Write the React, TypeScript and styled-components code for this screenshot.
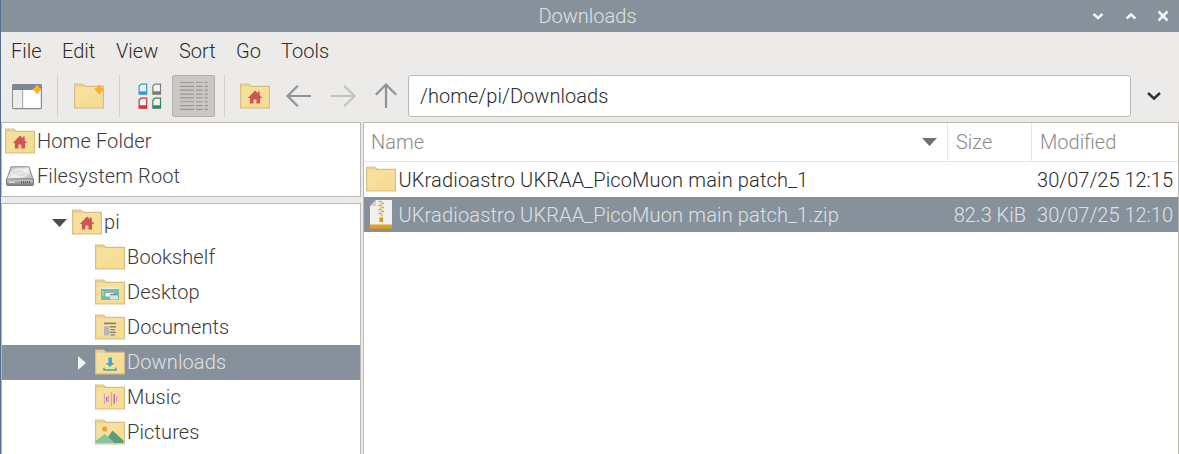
import React from 'react';
import styled, { createGlobalStyle } from 'styled-components';

const Global = createGlobalStyle`
  * { box-sizing: border-box; }
  body { margin: 0; overflow: hidden; background: #ecebe9; }
`;

const Window = styled.div`
  display: flex;
  flex-direction: column;
  width: 1179px;
  height: 454px;
  overflow: hidden;
  border-left: 1px solid #54708e;
  background: #ecebe9;
  color: #3a3a3a;
  font-family: Roboto, 'Liberation Sans', sans-serif;
  font-weight: 300;
  font-size: 20px;
  line-height: 24px;
  white-space: pre;
  svg { display: block; flex: none; }
`;

const TitleBar = styled.header`
  display: grid;
  grid-template-columns: 93px 1fr 93px;
  align-items: center;
  height: 32px;
  flex: none;
  background: #87919b;
  color: #dfe2e5;
`;
const Title = styled.span`
  text-align: center;
  padding-right: 5px;
`;
const WindowButtons = styled.div`
  display: flex;
  gap: 16.500px;
  padding-left: 4px;
`;

const MenuBar = styled.nav`
  display: flex;
  gap: 20px;
  height: 38px;
  flex: none;
  align-items: center;
  padding-left: 10px;
  color: #2b2b2b;
`;
const MenuItem = styled.span<{ $w: number }>`
  width: ${p => p.$w}px;
`;

const ToolBar = styled.div`
  display: flex;
  align-items: center;
  height: 52px;
  flex: none;
  padding-left: 4px;
`;
const Tool = styled.div<{ $w?: number; $active?: boolean }>`
  display: flex;
  align-items: center;
  justify-content: center;
  flex: none;
  width: ${p => p.$w ?? 44}px;
  height: 42px;
  margin-right: ${p => (p.$active ? 1 : 0)}px;
  border-radius: 2px;
  border: 1px solid ${p => (p.$active ? '#b5b0ac' : 'transparent')};
  background: ${p => (p.$active ? '#cbc7c4' : 'transparent')};
`;
const Divider = styled.div`
  width: 1px;
  height: 42px;
  margin: 0 8px;
  flex: none;
  background: #d2d0cd;
`;
const PathField = styled.div`
  width: 723px;
  height: 42px;
  margin-left: 1px;
  padding: 8px 11px;
  border: 1px solid #bab7b3;
  border-radius: 3px;
  background: #fff;
  color: #2b2b2b;
  letter-spacing: 0.03px;
`;

const Body = styled.main`
  display: flex;
  gap: 2px;
  flex: 1;
  min-height: 0;
`;
const Side = styled.aside`
  display: flex;
  flex-direction: column;
  gap: 6px;
  width: 360px;
  flex: none;
`;
const Panel = styled.section<{ $h?: number; $padTop?: number }>`
  ${p => (p.$h ? `height: ${p.$h}px; flex: none;` : 'flex: 1; min-height: 0;')}
  min-width: 0;
  overflow: hidden;
  border: solid #bbb8b4;
  border-width: ${p => (p.$h ? '1px' : '1px 1px 0')};
  background: #fff;
  padding-top: ${p => p.$padTop ?? 0}px;
`;

const TreeRow = styled.div<{ $indent: number; $selected?: boolean }>`
  display: flex;
  align-items: center;
  gap: 2px;
  height: 35px;
  padding-left: ${p => p.$indent}px;
  background: ${p => (p.$selected ? '#87919b' : 'transparent')};
  color: ${p => (p.$selected ? '#dfe2e5' : '#3a3a3a')};
`;
const TreeLabel = styled.span`
  padding-bottom: 2px;
  letter-spacing: 0.12px;
`;
const Expander = styled.span<{ $w: number }>`
  display: flex;
  width: ${p => p.$w}px;
`;

const HeaderRow = styled.div`
  display: flex;
  height: 39px;
  border-bottom: 1px solid #e6e4e2;
  color: #8b8b8b;
`;
const HeaderCell = styled.div<{ $w?: number }>`
  display: flex;
  align-items: center;
  justify-content: space-between;
  ${p => (p.$w ? `width: ${p.$w}px;` : 'flex: 1;')}
  padding: 0 10px 0 7px;
  & + & { border-left: 1px solid #e6e4e2; padding-left: 8px; }
`;
const FileRow = styled.div<{ $selected?: boolean }>`
  display: flex;
  align-items: center;
  height: 35px;
  padding-left: 2px;
  background: ${p => (p.$selected ? '#87919b' : 'transparent')};
  color: ${p => (p.$selected ? '#dfe2e5' : '#2b2b2b')};
`;
const FileIcon = styled.span`
  display: flex;
  justify-content: center;
  width: 30px;
`;
const FileName = styled.span`
  flex: 1;
  margin-left: 2.500px;
  letter-spacing: 0.155px;
`;
const FileMeta = styled.span<{ $w: number }>`
  width: ${p => p.$w}px;
  padding-right: 5px;
  text-align: right;
`;

type Emblem = 'home' | 'desktop' | 'documents' | 'downloads' | 'music' | 'pictures' | 'new';

const emblems: Record<Emblem, React.ReactNode> = {
  home: <path d="M15 7.500 7.800 15h2.100v5.500h3.500v-4h3v4h3.700V15h2.100l-2.500-2.700V8.500h-1.800v1.800Z" fill="#cf5556" />,
  desktop: (
    <>
      <path d="M6 10h18v11H6z" fill="#6dc0a4" />
      <path d="M6 8.500h18V10H6z" fill="#e9eeea" />
      <path d="M10.500 12.500h8v5h-8z" fill="#f2f4f4" />
      <path d="M15 15.500h8v5h-8z" fill="#cfe4e8" />
      <path d="M10.500 12.500h8v1.200h-8zM15 15h8v1.200h-8z" fill="#7d8b8e" />
      <path d="M7.200 12.500h1.500v1.200H7.200zM7.200 15h1.500v1.200H7.200z" fill="#d8efe6" />
    </>
  ),
  documents: (
    <>
      <path d="M9 8.500h12v1.700H9zM14.500 12h6.500v1.500h-6.500zM15.500 15h4.500v1.300h-4.500zM14.500 17.700h6.500v1.400h-6.500zM15.500 20.300h4.500v1.200h-4.500z" fill="#858078" />
      <path d="M9 12.200h5v9.300H9z" fill="#b9b7b5" />
    </>
  ),
  downloads: (
    <>
      <path d="M13.300 8.500h3.700V14h2.300L15 18 10.700 14h2.600Z" fill="#45a7cd" />
      <path d="M9 18.800v2.300h12v-2.300" fill="none" stroke="#4f9fae" strokeWidth="1.500" />
    </>
  ),
  music: (
    <>
      <path d="M9.500 10v10M13.500 11.500v7M16.500 8v14.500M21.500 12.500v5" stroke="#d9a0c4" strokeWidth="1.200" />
      <path d="M11.700 13v4.500M19.200 10v9.500" stroke="#b266c2" strokeWidth="1.300" />
    </>
  ),
  pictures: (
    <>
      <circle cx="9.700" cy="10" r="2.600" fill="#dea748" />
      <path d="m9 24 8.500-12.500 11 10v2.500z" fill="#5a9f78" />
      <path d="M1 24v-2.500l9-6.500L19.500 24z" fill="#86c4a2" />
    </>
  ),
  new: <path d="M25.200 2.500 26.700 5l2.500 1.500-2.500 1.500-1.500 2.500L23.700 8l-2.500-1.500L23.700 5Z" fill="#fdb02f" stroke="#fdb02f" strokeWidth="1.700" strokeLinejoin="round" />,
};

const Folder = ({ emblem }: { emblem?: Emblem }) => (
  <svg width="30" height="27" viewBox="0 0 30 27">
    <path d="M.6 1.600h7.800l2.600 2.300h18.400v21.500H.6z" transform="translate(0 -.6)" fill="#f7e09b" stroke="#d5bd8a" strokeWidth="1.200" />
    <path d="m1.200 24.200L28.800 6v18.200z" fill="#f5db90" opacity=".6" />
    <path d="M1 1.500h7.200l2 2H1z" fill="#e9cc88" />
    {emblem && emblems[emblem]}
  </svg>
);

const Drive = () => (
  <svg width="30" height="25" viewBox="0 0 30 25">
    <defs>
      <linearGradient id="drive-top" x1="0" y1="0" x2="1" y2="1">
        <stop offset="0" stopColor="#b9bab9" />
        <stop offset=".5" stopColor="#eeeeee" />
        <stop offset="1" stopColor="#a9aaa9" />
      </linearGradient>
      <linearGradient id="drive-face" x1="0" y1="0" x2="0" y2="1">
        <stop offset="0" stopColor="#d5d5d5" />
        <stop offset="1" stopColor="#777" />
      </linearGradient>
    </defs>
    <path d="M6 2.800h18l4.300 13H1.700z" fill="url(#drive-top)" stroke="#8c8d8c" />
    <path d="M1.500 15h27v5.500q0 1-1 1h-25q-1 0-1-1z" fill="url(#drive-face)" stroke="#777" />
    <ellipse cx="15" cy="9" rx="8" ry="3.800" fill="none" stroke="#fafafa" opacity=".8" />
    <ellipse cx="15" cy="9" rx="3" ry="1.300" fill="#f5f5f5" stroke="#c2c2c2" strokeWidth=".6" />
    <path d="M16 18.300h10" stroke="#555" strokeWidth="2" strokeDasharray="1 1" />
    <path d="M4 18.300h6" stroke="#eee" />
  </svg>
);

const Archive = () => (
  <svg width="24" height="32" viewBox="0 0 24 32">
    <path d="M7 1h16v29.500H1V7z" fill="#f0f0ef" />
    <path d="M7 1v6H1z" fill="#cfd0d0" />
    <path d="M1 25.500h22v5H1z" fill="#e0a12c" />
    <path d="M1 29.700h22v1.100H1z" fill="#b67f1e" />
    <path d="M9.500 2.500h3M12 4.500h3M9.500 6.500h3M12 8.500h3M9.500 10.500h3M12 12.500h3M9.500 14.500h3M12 16.500h2" stroke="#dca03a" strokeWidth="1.400" />
    <path d="M12.300 2v15" stroke="#e8c582" strokeWidth="1.200" />
    <path d="M10.500 18.500h3.600V23h-3.600z" fill="#d9941b" />
  </svg>
);

const NewWindow = () => (
  <svg width="30" height="27" viewBox="0 0 30 27">
    <rect x=".6" y="1.600" width="28.800" height="24" rx="1" fill="#fff" stroke="#8c8c8c" strokeWidth="1.200" />
    <path d="M1.200 7h9v18h-9z" fill="#ececec" />
    <path d="M.5 1.500h29V7H.5z" fill="#7d8793" />
    <path d="M10.700 7v18" stroke="#a3a3a3" />
    <path d="m25.200 2.800 1.500 2.500 2.300 1.200-2.300 1.200-1.500 2.500-1.500-2.500-2.300-1.200 2.300-1.200Z" fill="#fdb02f" stroke="#fdb02f" strokeWidth="1.700" strokeLinejoin="round" />
  </svg>
);

const gridTiles = [
  { x: 0.5, y: 0.5, c: '#2a9fd0' },
  { x: 14.3, y: 0.5, c: '#7b7b7b' },
  { x: 0.5, y: 14.5, c: '#c9353d' },
  { x: 14.3, y: 14.5, c: '#37855a' },
];
const IconView = () => (
  <svg width="24" height="27" viewBox="0 0 24 27">
    {gridTiles.map(t => (
      <g key={t.c} transform={`translate(${t.x} ${t.y})`}>
        <path d="M2.500.6h5.700v10H.6V2.500z" fill="#f2f3f3" stroke={t.c} strokeWidth="1.200" />
        <path d="M.6 7.800h7.600v2.800H.6z" fill={t.c} />
      </g>
    ))}
  </svg>
);

const ListView = () => (
  <svg width="30" height="30" viewBox="0 0 30 30">
    {Array.from({ length: 8 }, (_, i) => 1.5 + i * 3.85).map(y => (
      <path key={y} d={`M1 ${y}h14M17 ${y}h6.500M25.500 ${y}h3.500`} stroke="#9a9794" strokeWidth="1.200" />
    ))}
  </svg>
);

const Arrow = ({ turn, color }: { turn: number; color: string }) => (
  <svg width="28" height="28" viewBox="0 0 28 28">
    <path d="M26 14H2.500M12.800 3.800 2.500 14l10.300 10.200" transform={`rotate(${turn} 14 14)`} fill="none" stroke={color} strokeWidth="2.200" />
  </svg>
);

const Triangle = ({ right, color }: { right?: boolean; color: string }) => (
  <svg width={right ? 8 : 15} height={right ? 14 : 8} viewBox={right ? '0 0 8 14' : '0 0 15 8'}>
    <path d={right ? 'M0 0 8 7 0 14z' : 'M0 0h15L7.500 8z'} fill={color} />
  </svg>
);

const Glyph = ({ d, color = '#f4f5f6' }: { d: string; color?: string }) => (
  <svg width="16" height="16" viewBox="0 0 16 16">
    <path d={d} fill="none" stroke={color} strokeWidth="2.500" />
  </svg>
);

type Place = { label: string; emblem?: Emblem; indent: number; open?: boolean; selected?: boolean };
const places: Place[] = [
  { label: 'pi', emblem: 'home', indent: 50, open: true },
  { label: 'Bookshelf', indent: 93 },
  { label: 'Desktop', emblem: 'desktop', indent: 93 },
  { label: 'Documents', emblem: 'documents', indent: 93 },
  { label: 'Downloads', emblem: 'downloads', indent: 76, selected: true },
  { label: 'Music', emblem: 'music', indent: 93 },
  { label: 'Pictures', emblem: 'pictures', indent: 93 },
];

const menus: [string, number][] = [['File', 31], ['Edit', 34], ['View', 43], ['Sort', 37], ['Go', 25], ['Tools', 50]];

export default function App() {
  return (
    <Window>
      <Global />
      <TitleBar>
        <span />
        <Title>Downloads</Title>
        <WindowButtons>
          <Glyph d="M3.500 6 8 10l4.500-4" />
          <Glyph d="M3.500 10.500 8 6.500l4.500 4" />
          <Glyph d="m3.500 3.500 9 9M12.500 3.500l-9 9" />
        </WindowButtons>
      </TitleBar>
      <MenuBar>
        {menus.map(([label, w]) => <MenuItem key={label} $w={w}>{label}</MenuItem>)}
      </MenuBar>
      <ToolBar>
        <Tool><NewWindow /></Tool>
        <Divider />
        <Tool $w={45}><Folder emblem="new" /></Tool>
        <Divider />
        <Tool><IconView /></Tool>
        <Tool $w={43} $active><ListView /></Tool>
        <Divider />
        <Tool><Folder emblem="home" /></Tool>
        <Tool><Arrow turn={0} color="#929292" /></Tool>
        <Tool $w={43}><Arrow turn={180} color="#c3c2c1" /></Tool>
        <Tool $w={43}><Arrow turn={90} color="#929292" /></Tool>
        <PathField>/home/pi/Downloads</PathField>
        <Tool $w={45}><Glyph d="M2 5 8 10.500 14 5" color="#2e3436" /></Tool>
      </ToolBar>
      <Body>
        <Side>
          <Panel $h={75} $padTop={1}>
            <TreeRow $indent={3}><Folder emblem="home" /><TreeLabel>Home Folder</TreeLabel></TreeRow>
            <TreeRow $indent={3}><Drive /><TreeLabel>Filesystem Root</TreeLabel></TreeRow>
          </Panel>
          <Panel $padTop={1}>
            {places.map(p => (
              <TreeRow key={p.label} $indent={p.indent} $selected={p.selected}>
                {p.open && <Expander $w={18}><Triangle color="#4c4c4c" /></Expander>}
                {p.selected && <Expander $w={15}><Triangle right color="#f2f3f4" /></Expander>}
                <Folder emblem={p.emblem} />
                <TreeLabel>{p.label}</TreeLabel>
              </TreeRow>
            ))}
          </Panel>
        </Side>
        <Panel>
          <HeaderRow>
            <HeaderCell>Name<Triangle color="#707070" /></HeaderCell>
            <HeaderCell $w={84}>Size</HeaderCell>
            <HeaderCell $w={147}>Modified</HeaderCell>
          </HeaderRow>
          <FileRow>
            <FileIcon><Folder /></FileIcon>
            <FileName>UKradioastro UKRAA_PicoMuon main patch_1</FileName>
            <FileMeta $w={147}>30/07/25 12:15</FileMeta>
          </FileRow>
          <FileRow $selected>
            <FileIcon><Archive /></FileIcon>
            <FileName>UKradioastro UKRAA_PicoMuon main patch_1.zip</FileName>
            <FileMeta $w={84}>82.3 KiB</FileMeta>
            <FileMeta $w={147}>30/07/25 12:10</FileMeta>
          </FileRow>
        </Panel>
      </Body>
    </Window>
  );
}
